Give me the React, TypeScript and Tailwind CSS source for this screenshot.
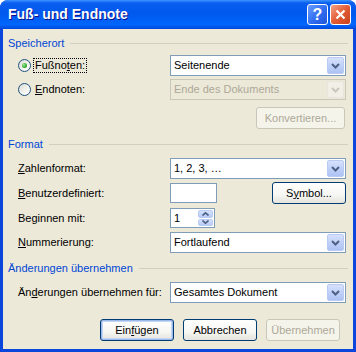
import React from 'react';

const Chevron = ({ color = '#4d6185' }: { color?: string }) => (
  <svg width="9" height="6" viewBox="0 0 9 6">
    <path d="M1 1 L4.5 4.5 L8 1" fill="none" stroke={color} strokeWidth="2" />
  </svg>
);

const Combo: React.FC<{ value: string; disabled?: boolean }> = ({ value, disabled }) => (
  <div
    className={`flex h-[21px] w-[176px] items-center border ${
      disabled ? 'border-[#c9c7ba] bg-[#ece9d8] text-[#aca899]' : 'border-[#7f9db9] bg-white text-black'
    }`}
  >
    <span className="flex-1 pl-[3px] leading-none">{value}</span>
    <div
      className={`m-[1px] flex h-[17px] w-[17px] items-center justify-center rounded-[2px] border ${
        disabled
          ? 'border-[#e8e6dc] bg-[#f1efe6]'
          : 'border-[#b9cbf3] bg-[linear-gradient(180deg,#d6e1fc_0%,#bccdf7_60%,#aec3f4_100%)]'
      }`}
    >
      <Chevron color={disabled ? '#c9c7ba' : '#4d6185'} />
    </div>
  </div>
);

const Btn: React.FC<{ children: React.ReactNode; w: string; disabled?: boolean; def?: boolean }> = ({
  children,
  w,
  disabled,
  def,
}) => (
  <div
    className={`${w} flex h-[22px] items-center justify-center rounded-[3px] border ${
      disabled
        ? 'border-[#c9c7ba] bg-[#f5f4ea] text-[#aca899]'
        : 'border-[#003c74] bg-[linear-gradient(180deg,#ffffff_0%,#f6f6f3_60%,#e4e3dc_100%)] text-black'
    } ${def ? 'shadow-[inset_0_0_0_1px_#9cb9ea,inset_0_0_0_2px_#c4d6f5]' : ''}`}
  >
    {children}
  </div>
);

const Radio: React.FC<{ checked?: boolean }> = ({ checked }) => (
  <div className="flex h-[13px] w-[13px] items-center justify-center rounded-full border border-[#1c5180] bg-[linear-gradient(135deg,#dcdcd5_0%,#f4f4f0_60%,#ffffff_100%)]">
    {checked && <div className="h-[5px] w-[5px] rounded-full bg-[radial-gradient(circle_at_35%_35%,#a8e8a0_0%,#3fb43a_50%,#1f8e1a_100%)]" />}
  </div>
);

const Header: React.FC<{ title: string; mt: string }> = ({ title, mt }) => (
  <div className={`${mt} flex h-[14px] items-center pl-[5px] pr-[5px]`}>
    <span className="leading-none text-[#0046d5]">{title}</span>
    <div className="ml-[6px] h-px flex-1 bg-[#d0d0bf]" />
  </div>
);

const Row: React.FC<{ label: React.ReactNode; mt: string; h: string; children: React.ReactNode }> = ({
  label,
  mt,
  h,
  children,
}) => (
  <div className={`${mt} ${h} flex items-center pl-[15px]`}>
    <div className="w-[152px] leading-none">{label}</div>
    {children}
  </div>
);

export default function App() {
  return (
    <div className="flex h-[352px] w-[356px] flex-col overflow-hidden rounded-t-[8px] bg-[#0a46dc] font-['Liberation_Sans',Arial,sans-serif] text-[11px] text-black">
      {/* Title bar */}
      <div className="flex h-[29px] shrink-0 items-center bg-[linear-gradient(180deg,#3d95ff_0%,#0a5ff0_10%,#0058ee_45%,#0066fc_85%,#0048dc_100%)] pl-[8px] pr-[5px]">
        <span className="flex-1 text-[14px] font-bold text-white [text-shadow:1px_1px_#0f1089]">Fuß- und Endnote</span>
        <div className="flex h-[21px] w-[21px] items-center justify-center rounded-[3px] border border-white bg-[linear-gradient(135deg,#6c9dff_0%,#2f6cf0_55%,#1f55d8_100%)] text-[16px] font-bold leading-none text-white">
          ?
        </div>
        <div className="ml-[2px] flex h-[21px] w-[21px] items-center justify-center rounded-[3px] border border-white bg-[linear-gradient(135deg,#f4a48a_0%,#e45c35_50%,#c6401f_100%)]">
          <svg width="11" height="11" viewBox="0 0 11 11">
            <path d="M1.5 1.5 L9.5 9.5 M9.5 1.5 L1.5 9.5" stroke="white" strokeWidth="2.2" />
          </svg>
        </div>
      </div>

      {/* Body */}
      <div className="mx-[3px] mb-[3px] flex flex-1 flex-col bg-[#ece9d8]">
        <Header title="Speicherort" mt="mt-[7px]" />

        <div className="mt-[5px] flex h-[21px] items-center pl-[15px]">
          <div className="flex w-[152px] items-center">
            <Radio checked />
            <span className="ml-[2px] border border-dotted border-black px-[1px] py-[1px] leading-none">
              Fußno<u>t</u>en:
            </span>
          </div>
          <Combo value="Seitenende" />
        </div>

        <div className="mt-[3px] flex h-[21px] items-center pl-[15px]">
          <div className="flex w-[152px] items-center">
            <Radio />
            <span className="ml-[3px] px-[1px] leading-none">
              <u>E</u>ndnoten:
            </span>
          </div>
          <Combo value="Ende des Dokuments" disabled />
        </div>

        <div className="mt-[7px] flex justify-end pr-[8px]">
          <Btn w="w-[89px]" disabled>
            Konvertieren...
          </Btn>
        </div>

        <Header title="Format" mt="mt-[8px]" />

        <Row label={<><u>Z</u>ahlenformat:</>} mt="mt-[7px]" h="h-[21px]">
          <Combo value="1, 2, 3, …" />
        </Row>

        <Row label={<><u>B</u>enutzerdefiniert:</>} mt="mt-[3px]" h="h-[22px]">
          <div className="h-[20px] w-[47px] border border-[#7f9db9] bg-white" />
          <div className="ml-[55px]">
            <Btn w="w-[74px]">
              S<u>y</u>mbol...
            </Btn>
          </div>
        </Row>

        <Row label="Beginnen mit:" mt="mt-[4px]" h="h-[20px]">
          <div className="flex h-[20px] w-[45px] items-center border border-[#7f9db9] bg-white">
            <span className="flex-1 pl-[3px] leading-none">1</span>
            <div className="m-[1px] flex h-[16px] w-[15px] flex-col gap-px">
              <div className="flex flex-1 items-center justify-center rounded-[2px] border border-[#b9cbf3] bg-[linear-gradient(180deg,#d6e1fc,#b8caf6)]">
                <svg width="7" height="4" viewBox="0 0 7 4">
                  <path d="M0.5 3.5 L3.5 0.8 L6.5 3.5" fill="none" stroke="#4d6185" strokeWidth="1.6" />
                </svg>
              </div>
              <div className="flex flex-1 items-center justify-center rounded-[2px] border border-[#b9cbf3] bg-[linear-gradient(180deg,#d6e1fc,#b8caf6)]">
                <svg width="7" height="4" viewBox="0 0 7 4">
                  <path d="M0.5 0.5 L3.5 3.2 L6.5 0.5" fill="none" stroke="#4d6185" strokeWidth="1.6" />
                </svg>
              </div>
            </div>
          </div>
        </Row>

        <Row label={<><u>N</u>ummerierung:</>} mt="mt-[4px]" h="h-[21px]">
          <Combo value="Fortlaufend" />
        </Row>

        <Header title="Änderungen übernehmen" mt="mt-[8px]" />

        <Row label={<>Än<u>d</u>erungen übernehmen für:</>} mt="mt-[7px]" h="h-[21px]">
          <Combo value="Gesamtes Dokument" />
        </Row>

        <div className="mt-[16px] flex gap-[9px] pl-[97px]">
          <Btn w="w-[74px]" def>
            Ein<u>f</u>ügen
          </Btn>
          <Btn w="w-[74px]">Abbrechen</Btn>
          <Btn w="w-[74px]" disabled>
            Übernehmen
          </Btn>
        </div>
      </div>
    </div>
  );
}
